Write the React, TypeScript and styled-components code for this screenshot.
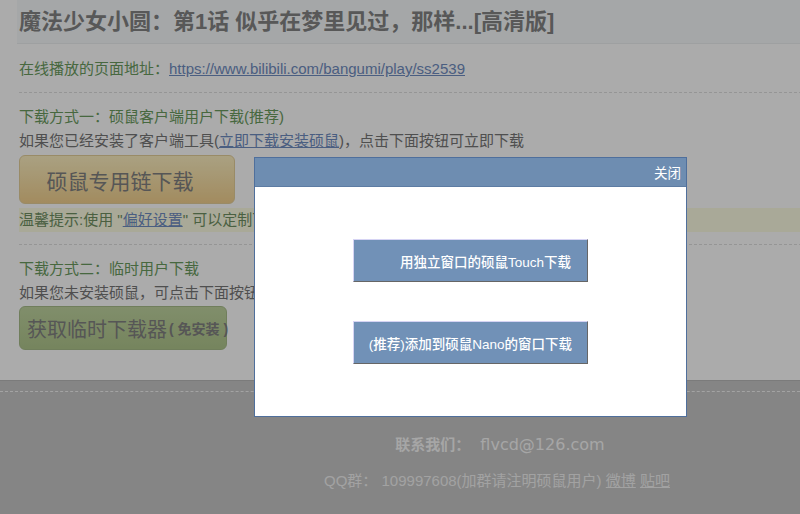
import styled, { createGlobalStyle } from "styled-components"

const GlobalStyle = createGlobalStyle`
    html, body {
        margin: 0;
        padding: 0;
        overflow: hidden;
        background: #fff;
    }
    body {
        font-family: "Liberation Sans", "Noto Sans CJK SC", sans-serif;
        color: #777;
    }
`

const Page = styled.div`
    min-height: 514px;
    display: flex;
    flex-direction: column;
`

const Container = styled.div`
    width: 960px;
    margin-left: 17px;
    flex-shrink: 0;
`

const Header = styled.div`
    height: 43px;
    padding-left: 2px;
    background: #f6fafb;
    border-bottom: 1px solid #eceff0;
`

const Title = styled.h1`
    margin: 0;
    font-size: 22px;
    line-height: 44px;
    font-weight: bold;
    color: #838383;
`

const Content = styled.div`
    padding: 13px 0 30px 2px;
`

const Row = styled.div<{ $green?: boolean; $top?: number }>`
    font-size: 15px;
    line-height: 24px;
    margin-top: ${(p) => p.$top || 0}px;
    color: ${(p) => (p.$green ? "#6a9b5e" : "#767676")};
    white-space: nowrap;
`

const A = styled.a`
    color: #6f8cc0;
    text-decoration: underline;
`

const Divider = styled.div<{ $top: number }>`
    margin-top: ${(p) => p.$top}px;
    border-top: 1px dashed #dedede;
`

const BigButton = styled.button<{ $kind: "gold" | "green" }>`
    display: flex;
    align-items: center;
    font-family: inherit;
    color: #808080;
    border-radius: 6px;
    cursor: pointer;
    padding: 0;
    white-space: nowrap;
    ${(p) =>
        p.$kind === "gold"
            ? `
        width: 216px;
        height: 49px;
        margin-top: 2px;
        justify-content: center;
        padding-right: 14px;
        font-size: 21px;
        background: linear-gradient(#fdf0c2, #f2d08e);
        border: 1px solid #e4cf9a;
    `
            : `
        width: 208px;
        height: 44px;
        margin-top: 1px;
        padding-left: 7px;
        font-size: 20px;
        background: linear-gradient(#c0d4a0, #b0c68c);
        border: 1px solid #a8bd8a;
    `}
`

const Small = styled.span`
    font-size: 14px;
    font-weight: bold;
    margin-left: 2px;
    white-space: pre;
`

const Tip = styled.div`
    margin-top: 4px;
    height: 24px;
    line-height: 24px;
    font-size: 15px;
    color: #6f8f62;
    background: #fdfde3;
    white-space: nowrap;
`

const Footer = styled.div`
    flex: 1;
    background: #c6c6c6;
    border-top: 1px solid #b8b8b8;
    padding-top: 10px;
`

const FooterDash = styled.div`
    border-top: 1px dashed #f4f4f4;
`

const FooterInner = styled.div`
    width: 960px;
    margin-left: 17px;
    text-align: center;
    color: #f2f2f2;
    padding-top: 41px;
`

const Contact = styled.div`
    font-size: 15px;
    line-height: 24px;
    font-weight: bold;
    color: #f8f8f8;
    padding-left: 6px;
`

const Mail = styled.span`
    font-family: "DejaVu Sans", sans-serif;
    font-weight: normal;
    font-size: 16px;
    margin-left: 10px;
`

const QQ = styled.div`
    margin-top: 12px;
    font-size: 15px;
    line-height: 24px;
    & a {
        color: #f2f2f2;
    }
`

const Overlay = styled.div`
    position: fixed;
    inset: 0;
    background: rgba(0, 0, 0, 0.33);
`

const Dialog = styled.div`
    position: absolute;
    left: 254px;
    top: 157px;
    width: 431px;
    height: 258px;
    background: #fff;
    border: 1px solid #4f6f9c;
    display: flex;
    flex-direction: column;
    align-items: center;
`

const DialogBar = styled.div`
    align-self: stretch;
    height: 28px;
    background: #6e8db1;
    border-bottom: 1px solid #5d7ca3;
    display: flex;
    justify-content: flex-end;
    align-items: center;
    padding-right: 5px;
    font-size: 13.5px;
    color: #fff;
    cursor: pointer;
`

const DialogButton = styled.button<{ $top: number; $indent?: number }>`
    width: 235px;
    height: 43px;
    margin-top: ${(p) => p.$top}px;
    padding: 0 0 0 ${(p) => p.$indent || 0}px;
    font-family: inherit;
    font-size: 13.5px;
    font-weight: 500;
    color: #fff;
    background: #7191b7;
    border: 1px solid;
    border-color: #d6d4f4 #666 #666 #d6d4f4;
    cursor: pointer;
    white-space: nowrap;
`

const App = () => {
    return (
        <Page>
            <GlobalStyle />
            <Container>
                <Header>
                    <Title>魔法少女小圆：第1话 似乎在梦里见过，那样...[高清版]</Title>
                </Header>
                <Content>
                    <Row $green>
                        在线播放的页面地址：<A href="#">https://www.bilibili.com/bangumi/play/ss2539</A>
                    </Row>
                    <Divider $top={11} />
                    <Row $green $top={12}>下载方式一：硕鼠客户端用户下载(推荐)</Row>
                    <Row>
                        如果您已经安装了客户端工具(<A href="#">立即下载安装硕鼠</A>)，点击下面按钮可立即下载
                    </Row>
                    <BigButton $kind="gold">硕鼠专用链下载</BigButton>
                    <Tip>
                        温馨提示:使用 "<A href="#">偏好设置</A>" 可以定制下载方式、文件命名规则等选项
                    </Tip>
                    <Divider $top={12} />
                    <Row $green $top={12}>下载方式二：临时用户下载</Row>
                    <Row>如果您未安装硕鼠，可点击下面按钮获取临时下载器进行下载</Row>
                    <BigButton $kind="green">
                        获取临时下载器<Small>( 免安装 )</Small>
                    </BigButton>
                </Content>
            </Container>
            <Footer>
                <FooterDash />
                <FooterInner>
                    <Contact>
                        联系我们：<Mail>flvcd@126.com</Mail>
                    </Contact>
                    <QQ>
                        QQ群： 109997608(加群请注明硕鼠用户) <a href="#">微博</a> <a href="#">贴吧</a>
                    </QQ>
                </FooterInner>
            </Footer>
            <Overlay />
            <Dialog>
                <DialogBar>关闭</DialogBar>
                <DialogButton $top={52} $indent={30}>用独立窗口的硕鼠Touch下载</DialogButton>
                <DialogButton $top={39}>(推荐)添加到硕鼠Nano的窗口下载</DialogButton>
            </Dialog>
        </Page>
    )
}

export default App
